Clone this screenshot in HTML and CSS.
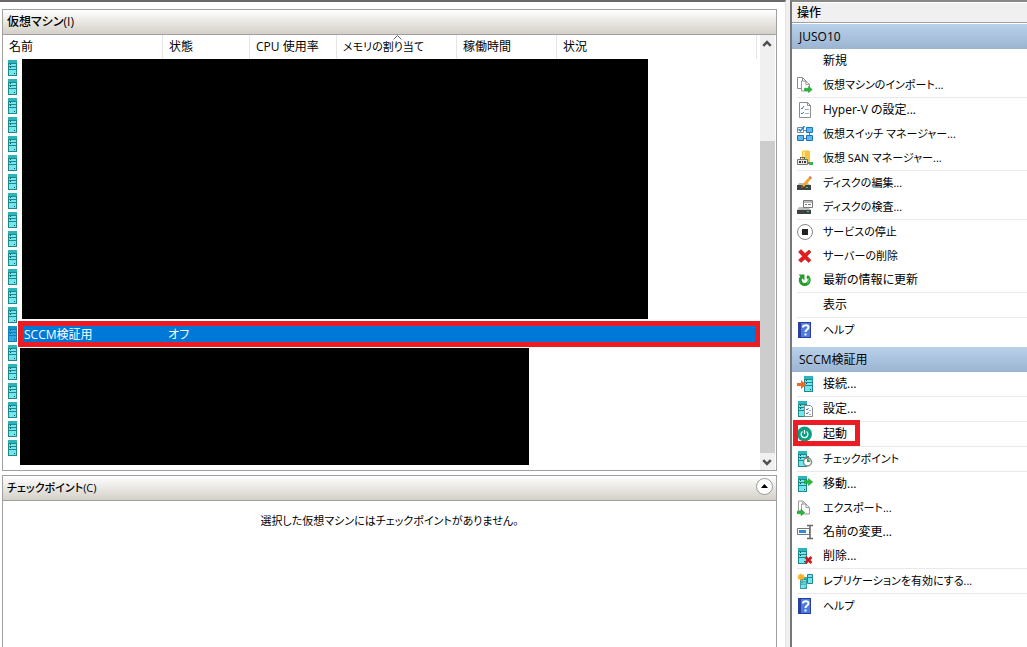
FILE: index.html
```html
<!DOCTYPE html>
<html lang="ja">
<head>
    <meta charset="UTF-8">
    <meta name="viewport" content="width=device-width, initial-scale=1.0">
    <title>Hyper-V マネージャー</title>
    <link rel="stylesheet" href="styles.css">
</head>
<body>
    <!-- アイコン定義 -->
    <svg class="defs" aria-hidden="true">
        <symbol id="server" viewBox="0 0 9 16">
            <path fill="#1f868c" d="M0 0h9v16H0z"/>
            <path fill="#2eb4b8" d="M0 0h9v3H0z"/>
            <path fill="#74e6ee" d="M1 4h7v2H1zM1 7h7v2H1zM1 10h7v5H1z"/>
            <path fill="#0d5559" d="M2 4h1v1H2zM2 7h1v1H2zM6 13h1v1H6z"/>
        </symbol>
        <symbol id="page" viewBox="0 0 10 12">
            <path fill="#fff" stroke="#8c8c8c" d="M.5.5h5l4 4v7h-9z"/>
            <path fill="none" stroke="#8c8c8c" d="M5.500.5v4h4"/>
        </symbol>
        <symbol id="green-arrow" viewBox="0 0 8 7">
            <path fill="#22bb33" stroke="#119922" stroke-width=".5" d="M0 2.300h4V.300L7.700 3.500 4 6.700v-2H0z"/>
        </symbol>
        <symbol id="help" viewBox="0 0 13 16">
            <path fill="#2a3f9c" d="M0 0h13v16H0z"/>
            <path fill="#4c7be0" d="M3 1h9v14H3z"/>
            <path fill="none" stroke="#fff" stroke-width="2" d="M5 5.500C5 2.500 10.500 2.500 10.500 5.500 10.500 7.500 7.500 7.500 7.500 10"/>
            <path fill="#fff" d="M6.500 11.500h2v2h-2z"/>
        </symbol>
    </svg>

    <main class="workspace">
        <section class="panel vm-panel">
            <h2 class="panel-title">仮想マシン(I)</h2>
            <div class="vm-content">
                <div class="vm-list">
                    <table class="vm-table">
                        <colgroup>
                            <col class="col-name">
                            <col class="col-state">
                            <col class="col-cpu">
                            <col class="col-memory">
                            <col class="col-uptime">
                            <col>
                        </colgroup>
                        <thead>
                            <tr>
                                <th>名前</th>
                                <th>状態</th>
                                <th>CPU 使用率</th>
                                <th class="sorted compact">メモリの割り当て<svg class="sort-mark" viewBox="0 0 9 5"><path d="M.5 4.500l4-4 4 4"/></svg></th>
                                <th>稼働時間</th>
                                <th>状況</th>
                            </tr>
                        </thead>
                        <tbody>
                            <tr><td colspan="6"><svg class="vm-icon"><use href="#server"/></svg></td></tr>
                            <tr><td colspan="6"><svg class="vm-icon"><use href="#server"/></svg></td></tr>
                            <tr><td colspan="6"><svg class="vm-icon"><use href="#server"/></svg></td></tr>
                            <tr><td colspan="6"><svg class="vm-icon"><use href="#server"/></svg></td></tr>
                            <tr><td colspan="6"><svg class="vm-icon"><use href="#server"/></svg></td></tr>
                            <tr><td colspan="6"><svg class="vm-icon"><use href="#server"/></svg></td></tr>
                            <tr><td colspan="6"><svg class="vm-icon"><use href="#server"/></svg></td></tr>
                            <tr><td colspan="6"><svg class="vm-icon"><use href="#server"/></svg></td></tr>
                            <tr><td colspan="6"><svg class="vm-icon"><use href="#server"/></svg></td></tr>
                            <tr><td colspan="6"><svg class="vm-icon"><use href="#server"/></svg></td></tr>
                            <tr><td colspan="6"><svg class="vm-icon"><use href="#server"/></svg></td></tr>
                            <tr><td colspan="6"><svg class="vm-icon"><use href="#server"/></svg></td></tr>
                            <tr><td colspan="6"><svg class="vm-icon"><use href="#server"/></svg></td></tr>
                            <tr><td colspan="6"><svg class="vm-icon"><use href="#server"/></svg></td></tr>
                            <tr class="selected">
                                <td><svg class="vm-icon"><use href="#server"/></svg><span class="vm-name">SCCM検証用</span></td>
                                <td>オフ</td>
                                <td></td>
                                <td></td>
                                <td></td>
                                <td></td>
                            </tr>
                            <tr><td colspan="6"><svg class="vm-icon"><use href="#server"/></svg></td></tr>
                            <tr><td colspan="6"><svg class="vm-icon"><use href="#server"/></svg></td></tr>
                            <tr><td colspan="6"><svg class="vm-icon"><use href="#server"/></svg></td></tr>
                            <tr><td colspan="6"><svg class="vm-icon"><use href="#server"/></svg></td></tr>
                            <tr><td colspan="6"><svg class="vm-icon"><use href="#server"/></svg></td></tr>
                            <tr><td colspan="6"><svg class="vm-icon"><use href="#server"/></svg></td></tr>
                        </tbody>
                    </table>
                    <div class="mask mask-top"></div>
                    <div class="mask mask-bottom"></div>
                    <div class="marker marker-row"></div>
                </div>
                <div class="scrollbar">
                    <button type="button" class="scroll-button" aria-label="上へ"><svg viewBox="0 0 8 6"><path d="M1 4.500l3-3 3 3"/></svg></button>
                    <div class="scroll-thumb"></div>
                    <button type="button" class="scroll-button" aria-label="下へ"><svg viewBox="0 0 8 6"><path d="M1 1.500l3 3 3-3"/></svg></button>
                </div>
            </div>
        </section>

        <section class="panel checkpoint-panel">
            <div class="panel-title">
                <h2 class="compact">チェックポイント(C)</h2>
                <button type="button" class="collapse" aria-label="折りたたむ"><svg viewBox="0 0 17 17"><circle cx="8.5" cy="8.5" r="8"/><path d="M5 10l3.500-4L12 10z"/></svg></button>
            </div>
            <p class="empty compact">選択した仮想マシンにはチェックポイントがありません。</p>
        </section>
    </main>

    <aside class="actions">
        <h2 class="actions-title">操作</h2>

        <h3 class="group-title">JUSO10</h3>
        <ul class="action-list">
            <li><button type="button"><span class="icon"></span>新規</button></li>
            <li><button type="button" class="compact"><svg class="icon" viewBox="0 0 16 16"><use href="#page" x="0" y="0" width="10" height="12"/><use href="#page" x="4" y="3" width="9" height="12"/><use href="#green-arrow" x="7" y="9" width="9" height="7"/></svg>仮想マシンのインポート...</button></li>
            <li class="line"><button type="button"><svg class="icon" viewBox="0 0 16 16"><path fill="#fff" stroke="#8c8c8c" d="M2.500.5h8l3 3v12h-11z"/><path fill="none" stroke="#8c8c8c" d="M10.500.5v3h3"/><path fill="none" stroke="#2485d6" d="M4 6l1 1 2-3M4 11l1 1 2-2"/><path stroke="#aaa" d="M8 7.500h4M8 11.500h4"/></svg>Hyper-V の設定...</button></li>
            <li><button type="button" class="compact"><svg class="icon" viewBox="0 0 16 16"><path stroke="#777" d="M7 4.500h3M7 12.500h3M12.500 6v4"/><path fill="#fff" stroke="#888" d="M.5 1.500h6v5h-6z"/><path fill="#62b7f2" stroke="#1777bd" d="M9.500 1.500h6v5h-6zM.5 9.500h6v5h-6zM9.500 9.500h6v5h-6z"/><path fill="none" stroke="#1b82ce" stroke-width="1.500" d="M1.500 3l2 2 4-5"/></svg>仮想スイッチ マネージャー...</button></li>
            <li><button type="button" class="compact"><svg class="icon" viewBox="0 0 16 16"><path fill="#f3c63d" d="M5 1q4-1.500 8 0v12H5z"/><path fill="#ffe58a" d="M6 1.500h2V8H6z"/><path fill="#666" d="M3 7h5v2H7V8H4v1H3z"/><path fill="#e8e8e8" stroke="#777" d="M.5 9.500h10v5H.5z"/><path fill="#333" d="M2 11h2v2H2zM5 11h1v2H5zM7 11h2v2H7z"/><path fill="#777" d="M11 12h1v2h-1z"/><path fill="#3bb54a" d="M12 12h4v3h-4z"/></svg>仮想 SAN マネージャー...</button></li>
            <li class="line"><button type="button" class="compact"><svg class="icon" viewBox="0 0 16 16"><path fill="#bbb" d="M2 8h9l3 3H0z"/><path fill="#3d4143" d="M0 10h14v5H0z"/><path fill="#3bdb66" d="M9 12h2v1H9z"/><path fill="#f3a52c" d="M5 10l7-8 2 2-7 8-3 1z"/><path fill="#c75e42" d="M12 2l1-1 2 2-1 1z"/><path fill="#5c4321" d="M5 10l2 2-3 1z"/></svg>ディスクの編集...</button></li>
            <li><button type="button" class="compact"><svg class="icon" viewBox="0 0 16 16"><path fill="#bbb" d="M2 8h9l3 3H0z"/><path fill="#3d4143" d="M0 11h14v4H0z"/><path fill="#3bdb66" d="M10 12h2v1h-2z"/><path fill="#fff" stroke="#777" d="M6.500 1.500h9v7h-9z"/><path stroke="#777" d="M7 3h8M8 5.500h2M11 5.500h3"/></svg>ディスクの検査...</button></li>
            <li class="line"><button type="button" class="compact"><svg class="icon" viewBox="0 0 16 16"><circle cx="8" cy="8" r="7.500" fill="#fff" stroke="#888"/><path fill="#222" d="M5 5h6v6H5z"/></svg>サービスの停止</button></li>
            <li><button type="button" class="compact"><svg class="icon" viewBox="0 0 16 16"><path fill="#e31b1b" stroke="#a80e0e" stroke-width=".5" d="M1.500 4L4 1.500 8 5.500 12 2l2 2-4 4.200 4 4-2.300 2.300L8 11l-4 3.500L1.500 12l4-3.800z"/></svg>サーバーの削除</button></li>
            <li><button type="button"><svg class="icon" viewBox="0 0 16 16"><path fill="none" stroke="#259c2d" stroke-width="3" d="M10 4.200A4.500 4.500 0 1 1 4.500 5"/><path fill="#259c2d" d="M1.500 2.500h6v6z"/><path fill="none" stroke="#65d65f" d="M11.500 6a4.500 4.500 0 0 1-1 5.500"/></svg>最新の情報に更新</button></li>
            <li class="line"><button type="button"><span class="icon"></span>表示</button></li>
            <li class="line"><button type="button" class="compact"><svg class="icon" viewBox="0 0 16 16"><use href="#help" x="1" y="0" width="13" height="16"/></svg>ヘルプ</button></li>
        </ul>

        <h3 class="group-title">SCCM検証用</h3>
        <ul class="action-list">
            <li><button type="button"><svg class="icon" viewBox="0 0 16 16"><use href="#server" x="7" y="0" width="9" height="16"/><path fill="#f26522" d="M0 7h4V4l5 4.500L4 13v-3H0z"/></svg>接続...</button></li>
            <li class="line"><button type="button"><svg class="icon" viewBox="0 0 16 16"><use href="#server" x="1" y="0" width="9" height="16"/><path fill="#fff" stroke="#8c8c8c" d="M7.500 4.500h6l2 2v9h-8z"/><path fill="none" stroke="#2485d6" d="M9 8l1 1 1.500-2M9 12l1 1 1.500-2"/><path stroke="#aaa" d="M12 9.500h2M12 13.500h2"/></svg>設定...</button></li>
            <li class="line"><button type="button"><svg class="icon" viewBox="0 0 16 16"><circle cx="7.500" cy="8" r="7.500" fill="#0ca082"/><path fill="none" stroke="#fff" stroke-width="1.200" d="M5.500 5.500a3.400 3.400 0 1 0 4 0M7.500 4v4"/></svg>起動</button><div class="marker marker-start"></div></li>
            <li class="line"><button type="button" class="compact"><svg class="icon" viewBox="0 0 16 16"><use href="#server" x="1" y="0" width="9" height="16"/><circle cx="10.500" cy="11" r="4" fill="#fff" stroke="#888" stroke-width="1.500"/><path fill="#777" d="M9 5h3v2H9z"/><path fill="#26a832" d="M10 11V8a3 3 0 0 1 3 3z"/></svg>チェックポイント</button></li>
            <li class="line"><button type="button"><svg class="icon" viewBox="0 0 16 16"><use href="#server" x="1" y="0" width="9" height="16"/><use href="#green-arrow" x="7" y="2" width="9" height="8"/></svg>移動...</button></li>
            <li><button type="button" class="compact"><svg class="icon" viewBox="0 0 16 16"><use href="#page" x="1" y="0" width="9" height="12"/><use href="#page" x="4" y="3" width="9" height="12"/><use href="#green-arrow" x="0" y="9" width="8" height="7"/></svg>エクスポート...</button></li>
            <li><button type="button"><svg class="icon" viewBox="0 0 16 16"><path fill="#fff" stroke="#777" d="M.5 4.500h12v6H.5z"/><path fill="#2d8ddd" d="M2 6h7v3H2z"/><path fill="none" stroke="#666" stroke-width="1.500" d="M10 1.500h6M10 14.500h6M13 1.500v13"/></svg>名前の変更...</button></li>
            <li><button type="button"><svg class="icon" viewBox="0 0 16 16"><use href="#server" x="1" y="0" width="9" height="16"/><path fill="none" stroke="#cf171f" stroke-width="2.500" d="M8.500 9l6 6M14.500 9l-6 6"/></svg>削除...</button></li>
            <li class="line"><button type="button" class="compact"><svg class="icon" viewBox="0 0 16 16"><use href="#server" x="3" y="4" width="7" height="12"/><path fill="#74e6ee" stroke="#1f868c" d="M10.500 1.500h5v9h-5z"/><path stroke="#1f868c" d="M11 4.500h4"/><path fill="#ffad1f" d="M4 0l1 2 2-1-.500 2.200L9 4 6.500 5 7 7 5 6 4 8 3 6 1 7l.500-2L0 4l1.800-.800L1 1l2 1z"/></svg>レプリケーションを有効にする...</button></li>
            <li class="line"><button type="button" class="compact"><svg class="icon" viewBox="0 0 16 16"><use href="#help" x="1" y="0" width="13" height="16"/></svg>ヘルプ</button></li>
        </ul>
    </aside>
</body>
</html>
```
FILE: styles.css
```css
* {
    box-sizing: border-box;
}
body {
    display: flex;
    min-height: 100vh;
    margin: 0;
    background: #f0f0f0;
    color: #000;
    font-family: "Open Sans", "Noto Sans CJK JP", sans-serif;
    font-size: 12px;
    line-height: 16px;
    font-feature-settings: "palt";
}
h2, h3, p, ul {
    margin: 0;
    padding: 0;
    font-size: 12px;
    font-weight: normal;
}
button {
    margin: 0;
    padding: 0;
    border: none;
    background: none;
    color: inherit;
    font: inherit;
    font-feature-settings: inherit;
}
.defs {
    position: absolute;
    width: 0;
    height: 0;
}
/* カナの多いラベル */
.compact {
    font-size: 11px;
}

/* 左ペイン */
.workspace {
    flex: 1;
    min-width: 0;
    display: flex;
    flex-direction: column;
    gap: 4px;
    padding: 7px 8px 0 2px;
    border-top: 2px solid #696969;
    border-right: 1px solid #e3e3e3;
    background: #fff;
}
.panel {
    border: 1px solid #a0a0a0;
}
.panel-title {
    display: flex;
    align-items: center;
    justify-content: space-between;
    height: 25px;
    padding: 0 3px 0 4px;
    border-bottom: 1px solid #a0a0a0;
    background: linear-gradient(#fff, #d4d0c8);
}
h2.panel-title, .panel-title h2 {
    font-weight: 500;
}
.vm-content {
    display: flex;
}
.vm-list {
    position: relative;
    flex: 1;
    min-width: 0;
    padding: 0 3px 12px 0;
}
.vm-table {
    width: 100%;
    table-layout: fixed;
    border-collapse: separate;
    border-spacing: 0;
}
.col-name {
    width: 160px;
}
.col-state, .col-cpu {
    width: 87px;
}
.col-memory {
    width: 120px;
}
.col-uptime {
    width: 100px;
}
.vm-table th {
    height: 24px;
    padding: 0 0 0 6px;
    border-right: 1px solid #e5e5e5;
    font-weight: normal;
    text-align: left;
    white-space: nowrap;
}
.sorted {
    position: relative;
}
.sort-mark {
    position: absolute;
    top: 0;
    left: 56px;
    width: 9px;
    height: 5px;
    fill: none;
    stroke: #666;
}
.vm-table td {
    height: 19px;
    padding: 1px 0 0 5px;
    line-height: 17px;
    vertical-align: top;
    white-space: nowrap;
}
.vm-icon {
    display: inline-block;
    width: 9px;
    height: 16px;
    vertical-align: top;
    shape-rendering: crispEdges;
}
.selected td {
    background: #0078d7;
    color: #fff;
}
.selected td:first-child {
    background: linear-gradient(to right, #fff 16px, #0078d7 16px);
}
.selected .vm-icon {
    background: #0078d7;
}
.selected .vm-icon use {
    opacity: 0.45;
}
.vm-name {
    padding-left: 7px;
}

/* 伏せた行と赤枠 */
.mask {
    position: absolute;
    background: #000;
}
.mask-top {
    top: 24px;
    left: 19px;
    width: 626px;
    height: 260px;
}
.mask-bottom {
    top: 313px;
    left: 17px;
    width: 509px;
    height: 117px;
}
.marker {
    position: absolute;
    border: 5px solid #ed1c24;
    pointer-events: none;
}
.marker-row {
    top: 286px;
    left: 15px;
    right: 0;
    height: 26px;
}
.marker-start {
    top: -1px;
    left: 1px;
    width: 67px;
    height: 26px;
}

.scrollbar {
    display: flex;
    flex-direction: column;
    width: 16px;
    border-right: 1px solid #fff;
    background: #f0f0f0;
}
.scroll-button {
    height: 17px;
    padding-right: 1px;
    line-height: 0;
}
.scroll-button svg {
    width: 10px;
    height: 8px;
    fill: none;
    stroke: #505050;
    stroke-width: 2;
}
.scroll-thumb {
    flex: 1;
    margin-top: 89px;
    background: #cdcdcd;
}

.checkpoint-panel {
    flex: 1;
    border-bottom: none;
}
.collapse {
    align-self: flex-start;
    width: 17px;
    height: 17px;
    margin-top: 2px;
}
.collapse svg {
    display: block;
}
.collapse circle {
    fill: #fff;
    stroke: #999;
}
.empty {
    padding-top: 12px;
    text-align: center;
}

/* 操作ペイン */
.actions {
    flex: 0 0 237px;
    margin-left: 4px;
    border-top: 2px solid #888;
    border-left: 2px solid #777;
    background: #fff;
}
.actions-title {
    height: 21px;
    padding: 2px 0 0 5px;
    border-top: 1px solid #fff;
    border-bottom: 1px solid #a0a0a0;
    background: #f0f0f0;
    font-weight: 500;
}
.group-title {
    height: 25px;
    padding-left: 7px;
    background: linear-gradient(#bad1ea, #9ab4d1);
    line-height: 25px;
}
.actions-title + .group-title {
    margin-top: 1px;
}
.action-list {
    list-style: none;
}
.action-list + .group-title {
    margin-top: 5px;
}
.action-list li {
    position: relative;
}
.action-list button {
    display: flex;
    align-items: center;
    gap: 10px;
    width: 100%;
    height: 24px;
    padding-left: 5px;
    text-align: left;
    white-space: nowrap;
}
.line::before {
    content: "";
    display: block;
    height: 1px;
    margin-left: 5px;
    background: #e9e9e9;
}
.icon {
    flex: none;
    width: 16px;
    height: 16px;
}
```
